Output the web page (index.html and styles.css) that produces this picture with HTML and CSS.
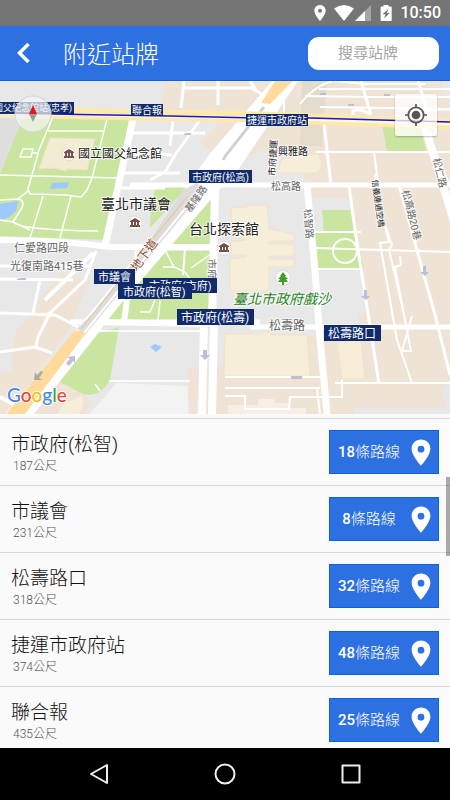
FILE: index.html
```html
<!DOCTYPE html>
<html lang="zh-Hant">
<head>
<meta charset="utf-8">
<meta name="viewport" content="width=device-width, initial-scale=1">
<title>附近站牌</title>
<link rel="stylesheet" href="styles.css">
</head>
<body>
<div class="status">
  <svg width="12" height="18" viewBox="0 0 12 18"><path fill="#fff" fill-rule="evenodd" d="M6 1C2.700 1 .3 3.500.3 6.700.3 10.500 6 17 6 17s5.700-6.500 5.700-10.300C11.700 3.500 9.300 1 6 1zm0 3.700a2 2 0 1 1 0 4 2 2 0 0 1 0-4z"/></svg>
  <svg class="wifi" width="20" height="18" viewBox="0 0 20 18"><path fill="#fff" d="M0 4.500Q10-2.500 20 4.500L10 17z"/></svg>
  <svg width="16" height="18" viewBox="0 0 16 18"><path fill="#a6a6a6" d="M16 1v16H0z"/><path fill="#fff" d="M10 7v10H0z"/></svg>
  <svg class="battery" width="12" height="18" viewBox="0 0 12 18"><path fill="#fff" d="M3.500 1h5v1.500H11q.7 0 .7.800V16.300q0 .7-.7.700H1.300q-.7 0-.7-.7V3.300q0-.8.7-.8h2.200z"/><path fill="#757575" d="M8.500 5 2.500 10.300H5.500L4 14.500 9.800 9H6.800z"/></svg>
  <span class="clock">10:50</span>
</div>
<header class="bar">
  <button class="back" aria-label="返回"><svg width="14" height="22" viewBox="0 0 14 22"><path d="M12.500 2 3.500 11l9 9" fill="none" stroke="#fff" stroke-width="3.500"/></svg></button>
  <h1 class="title">附近站牌</h1>
  <input class="search" type="text" placeholder="搜尋站牌" aria-label="搜尋站牌">
</header>
<main class="content">
<div class="map">
<svg class="canvas" viewBox="0 81 450 333" role="img" aria-label="地圖">
  <rect y="81" width="450" height="333" fill="#e8e8e8"/>
  <path fill="#dedede" d="M0 118h22L0 173z"/>
  <g fill="#efe3d6">
    <path d="M165 81H441L450 106V381L441 389 446 408 354 407V414H191L188 398V368L222 366 225 335H311L320 330H360L350 200 335 198H308L300 151 262 150 230 165 200 142 218 124 200 113H160z"/>
    <path d="M60 273 90 281 75 314 72 325 20 395 0 400V375L12 370 14 335 30 313z"/>
    <path d="M0 386 30 365 72 375 86 393Q92 402 86 414H0z"/>
  </g>
  <path fill="#e8e8e8" d="M318 270H360L366 313H300V270zM440 81h10v24z"/>
  <path fill="#f3f3f3" d="M116 383 188 386V414H90z"/>
  <path fill="#e3dccd" d="M302 81h25l-5 65h-22z"/>
  <g fill="#c9e59f">
    <path d="M22 119H129L107 240 0 236V174z"/>
    <path d="M156 186H188L150 228 151 205z"/>
    <path d="M206 190H218L213 246H157z"/>
    <path d="M160 251H212L208 320H104z"/>
    <path d="M99 333 119 327 110 380Q100 398 83 394L60 382z"/>
    <path d="M382 124H420L426 152H387z"/>
    <path d="M322 210H350L364 268 317 269 314 233H324z"/>
  </g>
  <g fill="#f7eed9" stroke="#f1e3c4" stroke-width="1">
    <path fill="#f2ecd2" d="M50 138 95 139 87 170 67 169 66 171 54 168 39 169z"/>
    <path d="M231 208 247 207V205H267L269 229 294 234V241H269V244H294V256H269V259H295L294 267H269V291H230V259L246 257V255H231V242L246 240V238H232z"/>
    <path d="M225 334H262V332H270L271 335H307L310 376H224z"/>
    <path d="M337 342 361 340 365 379H342z"/>
    <path d="M300 154H318Q326 168 316 173H278L281 160z"/>
  </g>
  <path fill="#f8eee5" d="M228 405h30v-6h16v4h15v5h17v6h-78z"/>
  <path fill="#f7eed9" d="M64 404 81 396 84 403 79 414H57z"/>
  <g fill="#9ec9ff">
    <path d="M0 204 18 201 16 211 9 217 0 221z"/>
    <path d="M52 183 69 182 67 188 50 189z"/>
    <path d="M150 347 155 344 162 347 156 352z"/>
  </g>
  <g fill="none" stroke="#fff">
    <path stroke-width="1.500" d="M107 119 92 178 87 190 81 197 66 195 30 194 28 189 39 150 52 119M48 131h56M0 175 118 178M28 191 18 199Q25 200 22 208L13 222 30 230M0 200 18 199M13 222 0 220M13 222Q20 230 98 231M43 196 30 238M71 196 60 238M23 149H33L31 157H20zM33 153h5"/>
    <path stroke-width="7" d="M133 119 105 246"/>
    <path stroke-width="6" d="M0 240Q60 240 110 247H214"/>
    <path stroke-width="3" d="M0 266H90M0 279 73 280M96 251 85 280 50 313 38 337 36 347M0 313 55 315 78 327M40 280 33 313M0 352 35 347 52 353M130 133H205M127 155 150 153 172 155M123 173H180M119 188H165M200 120 175 155 165 172 150 180M173 119 170 146M184 81 181 108M218 81V105M184 88H251L264 95M250 81 256 90"/>
    <path stroke-width="4" d="M137 250 129 300M0 397 15 405M93 253 45 300"/>
    <path stroke-width="5" d="M130 185H450M70 322H260M250 327H450"/>
    <path stroke-width="6" d="M90 322 214 324M127 300 124 322"/>
    <path stroke-width="8" d="M215 187 212 324M204 324 202 414M214 324 212 414"/>
    <path stroke-width="7" d="M307 185 315 270 319 327 327 414"/>
    <path stroke-width="8" d="M423 120 455 225"/>
    <path stroke-width="3" d="M361 81 371 115M353 117V111Q361 108 371 115M418 81 430 119M324 124 331 185M349 185 355 230 379 384M399 185 435 315 450 375"/>
    <path stroke-width="2" d="M334 81 366 84H426M319 89H450M305 96 368 97H450M320 107 450 109M316 152H450M374 152 379 190M313 232H361M316 269H361M315 248 450 252M385 226 389 242 380 243 397 340 412 383M386 228 392 245 389 250 403 310M400 256 401 265 395 267 404 315 411 351H402M412 316 402 351M335 383H450M342 380V397H290L289 409H245V396H225M225 388H320M317 388 320 414M225 377H320M284 87V120M185 249 183 275M333 81Q315 85 300 104"/>
    <path stroke-width="1.500" d="M165 250 174 267 185 272 195 286M191 268 211 254M163 267 174 267M140 312H150L155 300M160 301 158 320M100 331H205M109 381H190M95 384 100 391M405 110H450M436 152 450 185M375 174V185"/>
    <circle cx="345" cy="251" r="12" stroke-width="2"/>
  </g>
  <path fill="#fff" d="M272 81H298L237 171 220 189 119 306 34 414H5L81 324 140 252 208 156z"/>
  <path fill="#dddcda" d="M183 190 197 183 204 190 85 335 77 329 92 314 138 257z"/>
  <path d="m206 183-122 150" stroke="#fff" stroke-width="2"/>
  <path d="m188 196-45 55-62 78" fill="none" stroke="#dfc28d" stroke-width="1"/>
  <path fill="#ffda9c" d="M275 81H293L270 104 261 103zM75 330 86 333 25 414H6z"/>
  <path d="M264 107 226 155l-3 5" fill="none" stroke="#d1d1d1" stroke-width="3"/>
  <g fill="none">
    <path stroke="#ffe9a9" stroke-width="11" d="M0 111Q30 113 140 115L260 117 450 124"/>
    <path stroke="#fff7dc" stroke-width="3" d="M0 113 140 116 260 118 450 124"/>
    <path stroke="#1616d2" stroke-width="1.500" d="M0 113 80 114.500 170 116 260 118H310L450 122"/>
  </g>
  <g fill="#bbbfd4">
    <path d="M203 350h4v5h3l-5 5-5-5h3z"/><path d="M364 290h3v6h3l-4 4-5-4h3zM423 266h3v6h3l-4 4-5-4h3z"/>
    <path d="m75 356-8 1 3 2-4 4 3 3 4-5 2 2z"/><path fill="#aaa" d="m34 380 1-8 2 3 4-4 2 1-4 6 3 2z"/>
    <path d="M291 376h11v3h-11zM184 134l3-1h4v2h-7zM17 279l3-1h6v2h-9z"/>
    <path d="M348 104h6v2h-6zM384 94h6v2h-6zM320 93h6v2h-6z"/>
  </g>

  <g class="road">
    <text x="14" y="252">仁愛路四段</text>
    <text x="10" y="270">光復南路415巷</text>
    <text class="small" x="271" y="190">松高路</text>
    <text class="s12" x="269" y="330">松壽路</text>
    <text class="small" transform="translate(190 213) rotate(-54)">基隆路</text>
    <text class="small" transform="translate(208 259) rotate(88)">市府路</text>
    <text class="small" transform="translate(304 209) rotate(86)">松智路</text>
    <text class="small" transform="translate(433 159) rotate(77)">松仁路</text>
    <text class="small" transform="translate(402 191) rotate(76)">松高路20巷</text>
  </g>
  <g class="place">
    <text class="tiny" transform="translate(275 176) rotate(-87)">市府捷運</text>
    <text class="small" x="278" y="155">興雅路</text>
    <text class="fine" transform="translate(372 180) rotate(82)">信義連通空橋</text>
    <text class="s12 tunnel" transform="translate(137 272) rotate(-54)">地下道</text>
    <text class="s12" x="78" y="158">國立國父紀念館</text>
    <text class="big" x="101" y="209">臺北市議會</text>
    <text class="big" x="189" y="234">台北探索館</text>
    <text class="big park" x="233" y="304">臺北市政府戲沙</text>
  </g>
  <g fill="#fff" stroke="#d4d4d4" stroke-width=".8">
    <circle cx="69" cy="154" r="6.500"/><circle cx="135" cy="223" r="7"/><circle cx="224" cy="248" r="7"/><circle cx="283" cy="278" r="7.500"/>
  </g>
  <g fill="#765148">
    <path id="museum" d="m69 149 5 3v1h-1v3h1v2H64v-2h1v-3h-1v-1zm-2 4v3h1v-3zm3 0v3h1v-3z"/>
    <use href="#museum" x="66" y="69"/><use href="#museum" x="155" y="94"/>
  </g>
  <path fill="#43a023" d="m283 272 3 4h-1l3 3h-2l2 3h-4v3h-2v-3h-4l2-3h-2l3-3h-1z"/>

  <g class="stop">
    <rect x="-10" y="102" width="84" height="12"/><text class="tiny" x="-6" y="111">國父紀念館站(忠孝)</text>
    <rect x="131" y="104" width="32" height="12"/><text class="small" x="132" y="114">聯合報</text>
    <rect x="246" y="114" width="62" height="12"/><text class="small" x="247" y="124">捷運市政府站</text>
    <rect x="189" y="170" width="63" height="13"/><text class="small" x="192" y="181">市政府(松高)</text>
    <rect x="143" y="278" width="74" height="15"/><text x="149" y="290">市政府(市府)</text>
    <rect x="94" y="269" width="41" height="15"/><text x="98" y="281">市議會</text>
    <rect x="118" y="284" width="74" height="15"/><text x="123" y="296">市政府(松智)</text>
    <rect x="177" y="309" width="77" height="16"/><text class="s12" x="181" y="322">市政府(松壽)</text>
    <rect x="324" y="325" width="57" height="16"/><text class="s12" x="328" y="338">松壽路口</text>
  </g>

  <g>
    <circle cx="33" cy="114" r="18" fill="#f4f4f4" fill-opacity=".72" stroke="#d4d4d4" stroke-width="1"/>
    <path fill="#e31b1b" d="m33 105 4 9h-8z"/><path fill="#9d9d9d" d="M29 114h8l-4 8z"/>
  </g>
  <text class="logo" x="7" y="402"><tspan fill="#4285f4">G</tspan><tspan fill="#ea4335">o</tspan><tspan fill="#fbbc05">o</tspan><tspan fill="#4285f4">g</tspan><tspan fill="#34a853">l</tspan><tspan fill="#ea4335">e</tspan></text>
</svg>
<button class="locate" aria-label="我的位置"><svg width="24" height="24" viewBox="0 0 24 24"><circle cx="12" cy="12" r="4.300" fill="#555"/><path d="M12 1v3M12 20v3M1 12h3M20 12h3" stroke="#555" stroke-width="1.700"/><circle cx="12" cy="12" r="7.700" fill="none" stroke="#555" stroke-width="1.700"/></svg></button>
</div>
<svg class="defs" aria-hidden="true"><symbol id="pin" viewBox="0 0 20 27"><path fill="#fff" fill-rule="evenodd" d="M10 .5C4.700.5.6 4.500.6 9.700.6 16.500 10 26.700 10 26.700s9.400-10.200 9.400-17C19.400 4.500 15.300.5 10 .5zm0 6.300a3.400 3.400 0 1 1 0 6.800 3.400 3.400 0 0 1 0-6.800z"/></symbol></svg>
<ul class="list">
  <li class="row"><div class="info"><h2 class="name">市政府(松智)</h2><p class="dist">187公尺</p></div><button class="routes"><span class="count"><b>18</b>條路線</span><svg class="pin"><use href="#pin"/></svg></button></li>
  <li class="row"><div class="info"><h2 class="name">市議會</h2><p class="dist">231公尺</p></div><button class="routes"><span class="count"><b>8</b>條路線</span><svg class="pin"><use href="#pin"/></svg></button></li>
  <li class="row"><div class="info"><h2 class="name">松壽路口</h2><p class="dist">318公尺</p></div><button class="routes"><span class="count"><b>32</b>條路線</span><svg class="pin"><use href="#pin"/></svg></button></li>
  <li class="row"><div class="info"><h2 class="name">捷運市政府站</h2><p class="dist">374公尺</p></div><button class="routes"><span class="count"><b>48</b>條路線</span><svg class="pin"><use href="#pin"/></svg></button></li>
  <li class="row"><div class="info"><h2 class="name">聯合報</h2><p class="dist">435公尺</p></div><button class="routes"><span class="count"><b>25</b>條路線</span><svg class="pin"><use href="#pin"/></svg></button></li>
</ul>
<span class="thumb"></span>
</main>
<nav class="nav">
  <button aria-label="上一頁"><svg width="22" height="22" viewBox="0 0 22 22"><path d="M19 2v18L3 11z"/></svg></button>
  <button aria-label="主畫面"><svg width="22" height="22" viewBox="0 0 22 22"><circle cx="11" cy="11" r="9.500"/></svg></button>
  <button aria-label="最近使用"><svg width="22" height="22" viewBox="0 0 22 22"><rect x="2.500" y="2.500" width="17" height="17"/></svg></button>
</nav>
</body>
</html>
```
FILE: styles.css
```css
* { box-sizing: border-box; }
body {
  margin: 0;
  height: 100vh;
  display: flex;
  flex-direction: column;
  overflow: hidden;
  background: #fafafa;
  color: #111;
  font-family: Roboto, "Noto Sans CJK TC", sans-serif;
}
button { border: 0; padding: 0; background: none; font: inherit; color: inherit; }
svg { display: block; }
h1, h2, p, ul { margin: 0; padding: 0; font-weight: 300; }

.status {
  flex: none;
  height: 26px;
  padding: 0 9px;
  display: flex;
  align-items: center;
  justify-content: flex-end;
  background: #757575;
  color: #fff;
}
.wifi { margin-left: 8px; }
.wifi + svg { margin-left: 1px; }
.battery { margin-left: 9px; }
.clock { margin-left: 8px; font-size: 16px; font-weight: 500; line-height: 28px; }

.bar {
  flex: none;
  height: 55px;
  padding: 0 11px 0 16px;
  display: flex;
  align-items: center;
  background: #2d70e2;
  border-bottom: 1px solid #0d60de;
  color: #fff;
}
.title { flex: 1; margin-left: 33px; padding-top: 3px; font-size: 24px; line-height: 32px; }
.search {
  width: 131px;
  height: 33px;
  padding: 0 11px 0 0;
  border: 0;
  border-radius: 11px;
  background: #fff;
  text-align: center;
  font: inherit;
  font-size: 15px;
}
.search::placeholder { color: #a5a5a5; opacity: 1; }

.content {
  flex: 1;
  min-height: 0;
  position: relative;
  display: flex;
  flex-direction: column;
  overflow: hidden;
}
.map { flex: none; position: relative; margin-bottom: 4px; }
.canvas { width: 100%; height: auto; }
.canvas text { font-family: Roboto, "Noto Sans CJK TC", sans-serif; }
.road text, .place text {
  stroke: #fff;
  stroke-opacity: 0.8;
  stroke-width: 2px;
  stroke-linejoin: round;
  paint-order: stroke;
}
.road text { font-size: 11px; fill: #666; }
.place text { fill: #222; }
.stop rect { fill: #102a6b; }
.stop text { fill: #fff; font-size: 11px; }
.canvas .fine { font-size: 8px; }
.canvas .tiny { font-size: 9px; }
.canvas .small { font-size: 10px; }
.canvas .s12 { font-size: 12px; }
.canvas .big { font-size: 14px; }
.place .tunnel { fill: #8a4b32; }
.place .park { fill: #25811a; font-style: italic; }
.canvas .logo {
  font-family: Lato, sans-serif;
  font-size: 19px;
  font-weight: 500;
  stroke: #fff;
  stroke-width: 2px;
  paint-order: stroke;
}
.locate {
  position: absolute;
  top: 13px;
  right: 13px;
  width: 42px;
  height: 42px;
  display: flex;
  align-items: center;
  justify-content: center;
  border-radius: 2px;
  background: rgba(255, 255, 255, 0.75);
  box-shadow: 0 1px 2px rgba(0, 0, 0, 0.25);
}

.defs { position: absolute; width: 0; height: 0; }
.list { list-style: none; }
.row {
  height: 67px;
  padding: 0 11px;
  display: flex;
  align-items: center;
  justify-content: space-between;
  border-top: 1px solid #d9d9d9;
}
.info { padding-top: 3px; }
.name { font-size: 19px; line-height: 24px; }
.dist { padding-left: 2px; font-size: 12px; line-height: 18px; color: #555; }
.routes {
  width: 110px;
  height: 44px;
  padding: 0 7px 0 8px;
  display: flex;
  align-items: center;
  justify-content: space-between;
  border: 1px solid #0d60de;
  background: #2d70e2;
  color: #fff;
}
.count { flex: 1; padding-right: 11px; text-align: center; font-size: 15px; line-height: 22px; white-space: nowrap; }
.count b { font-weight: 500; }
.pin { flex: none; width: 20px; height: 27px; }
.thumb {
  position: absolute;
  right: 0;
  top: 396px;
  width: 4px;
  height: 79px;
  background: rgba(0, 0, 0, 0.32);
}

.nav {
  flex: none;
  height: 52px;
  padding: 0 36px;
  display: flex;
  align-items: center;
  background: #000;
}
.nav button { flex: 1; display: flex; justify-content: center; }
.nav svg { fill: none; stroke: #eee; stroke-width: 2px; stroke-linejoin: round; }
```
